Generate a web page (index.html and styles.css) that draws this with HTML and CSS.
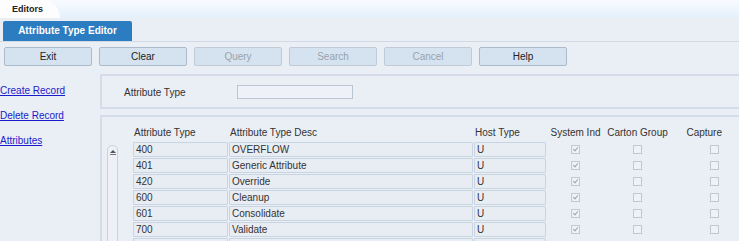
FILE: index.html
```html
<!DOCTYPE html>
<html lang="en">
<head>
    <meta charset="UTF-8">
    <title>Attribute Type Editor</title>
    <link rel="stylesheet" href="styles.css">
</head>
<body>
    <div class="topbar">
        <div class="crumb">Editors</div>
    </div>
    <div class="tabs">
        <div class="tab active">Attribute Type Editor</div>
    </div>
    <div class="toolbar">
        <button class="btn">Exit</button>
        <button class="btn">Clear</button>
        <button class="btn" disabled>Query</button>
        <button class="btn" disabled>Search</button>
        <button class="btn" disabled>Cancel</button>
        <button class="btn">Help</button>
    </div>

    <div class="main">
        <div class="sidebar">
            <a href="#">Create Record</a>
            <a href="#">Delete Record</a>
            <a href="#">Attributes</a>
        </div>
        <div class="content">
            <div class="panel search">
                <label>Attribute Type</label>
                <input type="text" class="field">
            </div>
            <div class="panel results">
                <div class="scroll">
                    <div class="scrollbar"><span class="arrow"></span></div>
                </div>
                <div class="grid">
                    <div class="head">Attribute Type</div>
                    <div class="head">Attribute Type Desc</div>
                    <div class="head">Host Type</div>
                    <div class="head center">System Ind</div>
                    <div class="head center">Carton Group</div>
                    <div class="head right">Capture</div>

                    <div class="cell">400</div><div class="cell">OVERFLOW</div><div class="cell">U</div>
                    <div class="chk-cell"><span class="chk on"></span></div><div class="chk-cell"><span class="chk"></span></div><div class="chk-cell end"><span class="chk"></span></div>

                    <div class="cell">401</div><div class="cell">Generic Attribute</div><div class="cell">U</div>
                    <div class="chk-cell"><span class="chk on"></span></div><div class="chk-cell"><span class="chk"></span></div><div class="chk-cell end"><span class="chk"></span></div>

                    <div class="cell">420</div><div class="cell">Override</div><div class="cell">U</div>
                    <div class="chk-cell"><span class="chk on"></span></div><div class="chk-cell"><span class="chk"></span></div><div class="chk-cell end"><span class="chk"></span></div>

                    <div class="cell">600</div><div class="cell">Cleanup</div><div class="cell">U</div>
                    <div class="chk-cell"><span class="chk on"></span></div><div class="chk-cell"><span class="chk"></span></div><div class="chk-cell end"><span class="chk"></span></div>

                    <div class="cell">601</div><div class="cell">Consolidate</div><div class="cell">U</div>
                    <div class="chk-cell"><span class="chk on"></span></div><div class="chk-cell"><span class="chk"></span></div><div class="chk-cell end"><span class="chk"></span></div>

                    <div class="cell">700</div><div class="cell">Validate</div><div class="cell">U</div>
                    <div class="chk-cell"><span class="chk on"></span></div><div class="chk-cell"><span class="chk"></span></div><div class="chk-cell end"><span class="chk"></span></div>

                    <div class="cell"></div><div class="cell"></div><div class="cell"></div>
                    <div class="chk-cell"><span class="chk on"></span></div><div class="chk-cell"><span class="chk"></span></div><div class="chk-cell end"><span class="chk"></span></div>
                </div>
            </div>
        </div>
    </div>
</body>
</html>
```

FILE: styles.css
```css
body, html {
    margin: 0;
    height: 100%;
    overflow: hidden;
}
body {
    font-family: 'Liberation Sans', Arial, sans-serif;
    font-size: 10px;
    color: #333;
    background: #eaeef5;
    width: 739px;
}
.topbar {
    height: 18px;
    background: linear-gradient(180deg, #f7fbff 0%, #e5f0fb 100%);
}
.crumb {
    width: 48px;
    height: 18px;
    padding-left: 12px;
    line-height: 18px;
    font-size: 9px;
    font-weight: bold;
    color: #222;
    background: #fdfdfe;
    border-top-right-radius: 16px 18px;
}
.tabs {
    height: 23px;
    padding-left: 3px;
    display: flex;
    align-items: flex-end;
    border-bottom: 1px solid #d0d9e4;
}
.tab.active {
    width: 129px;
    height: 20px;
    line-height: 20px;
    text-align: center;
    font-weight: bold;
    color: #fff;
    background: #2b7cc1;
    border-radius: 2px 2px 0 0;
}
.toolbar {
    height: 32px;
    padding: 5px 0 0 4px;
    box-sizing: border-box;
    display: flex;
    gap: 7px;
    align-items: flex-start;
}
.btn {
    width: 88px;
    height: 19px;
    padding: 0;
    font-family: inherit;
    font-size: 10px;
    color: #222;
    background: #d5e3f1;
    border: 1px solid #acbbcb;
    border-radius: 2px;
}
.btn:disabled {
    color: #9aa2ab;
    border-color: #c0cbd7;
}
.main {
    display: flex;
    height: 167px;
    overflow: hidden;
}
.sidebar {
    flex: none;
    width: 100px;
    padding-top: 11px;
    box-sizing: border-box;
    display: flex;
    flex-direction: column;
    gap: 13px;
}
.sidebar a {
    color: #1b1bcc;
    line-height: 12px;
    font-size: 10px;
}
.content {
    width: 660px;
    flex: none;
}
.panel {
    border: 2px solid #d3dce8;
    box-sizing: border-box;
}
.search {
    height: 35px;
    display: flex;
    align-items: center;
    padding-left: 22px;
}
.search label {
    width: 113px;
    margin-top: 2px;
}
.field {
    width: 116px;
    height: 14px;
    box-sizing: border-box;
    border: 1px solid #b9c6d5;
    background: #eef2f8;
    margin-top: 1px;
}
.results {
    margin-top: 6px;
    height: 140px;
    display: flex;
    padding-top: 10px;
    border-bottom: none;
}
.scroll {
    flex: none;
    width: 31px;
    padding-top: 18px;
    padding-left: 5px;
    box-sizing: border-box;
}
.scrollbar {
    width: 11px;
    height: 120px;
    box-sizing: border-box;
    border: 1px solid #c9d3de;
    border-radius: 5px 5px 0 0;
    background: #edf1f7;
    display: flex;
    justify-content: center;
}
.arrow {
    margin-top: 4px;
    width: 0;
    height: 0;
    border-left: 3px solid transparent;
    border-right: 3px solid transparent;
    border-bottom: 3px solid #555;
    border-top: 0;
    position: relative;
}
.arrow::after {
    content: "";
    position: absolute;
    top: 4px;
    left: -3px;
    width: 6px;
    border-top: 1px solid #777;
}
.grid {
    display: grid;
    grid-template-columns: 95px 244px 72px 56px 66px 53px;
    grid-template-rows: 14px;
    grid-auto-rows: 15px;
    column-gap: 1px;
    row-gap: 1px;
}
.head {
    line-height: 12px;
    padding-left: 1px;
    color: #333;
}
.head.center { text-align: center; }
.head.right { text-align: right; padding-right: 2px; }
.cell {
    border: 1px solid #c8d4e2;
    border-radius: 1px;
    background: #e8edf4;
    line-height: 13px;
    padding-left: 2px;
    color: #333;
}
.chk-cell {
    display: flex;
    align-items: center;
    justify-content: center;
}
.chk-cell.end {
    justify-content: flex-end;
    padding-right: 5px;
}
.chk {
    width: 9px;
    height: 9px;
    box-sizing: border-box;
    border: 1px solid #c4c8cd;
    background: #eef1f5;
    position: relative;
}
.chk.on::after {
    content: "";
    position: absolute;
    left: 2px;
    top: 0px;
    width: 2px;
    height: 4px;
    border-right: 1px solid #a0a6ad;
    border-bottom: 1px solid #a0a6ad;
    transform: rotate(40deg);
}
```
